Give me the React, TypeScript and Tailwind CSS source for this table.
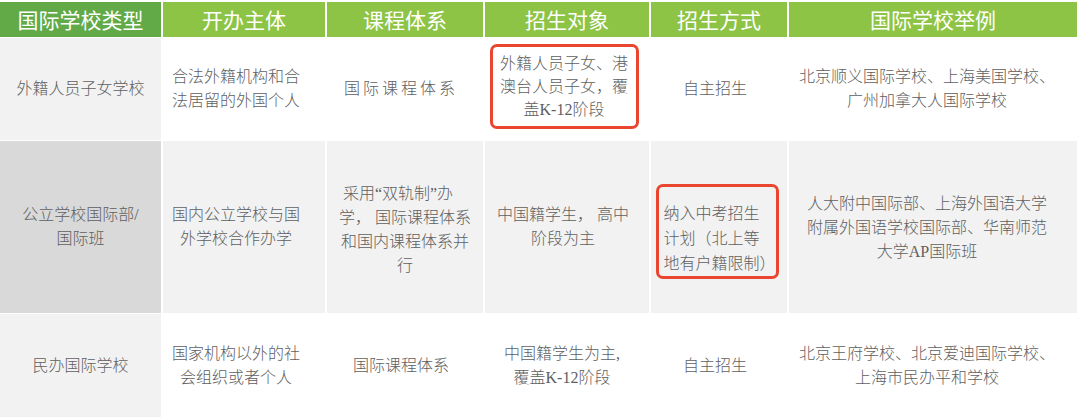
import type { ReactNode } from "react";

const body = "font-['Liberation_Serif','Noto_Sans_CJK_SC',serif] font-light text-[#606060]";

const heads = [
  "国际学校类型",
  "开办主体",
  "课程体系",
  "招生对象",
  "招生方式",
  "国际学校举例",
];

function Cell({ className, children }: { className?: string; children: ReactNode }) {
  return (
    <div className={`flex items-center justify-center text-center text-[16px] leading-[24px] ${body} ${className ?? ""}`}>
      {children}
    </div>
  );
}

function RedBox({ className, children }: { className?: string; children: ReactNode }) {
  return (
    <div className={`rounded-[7px] border-[3px] border-[#e9452f] ${className ?? ""}`}>{children}</div>
  );
}

export default function App() {
  return (
    <div className="h-[417px] w-[1080px] overflow-hidden bg-white pt-[2px]">
      <div className="grid w-[1077px] grid-cols-[161px_162px_156px_164px_136px_288px] grid-rows-[35px_102px_172px_104px] gap-x-[2px] gap-y-[1px]">
        {heads.map((h, i) => (
          <div
            key={h}
            className={`flex items-center justify-center font-['Noto_Sans_CJK_SC',sans-serif] text-[21px] text-white ${
              i === 0 ? "bg-[#62aa47]" : "bg-[#8dc445]"
            }`}
          >
            {h}
          </div>
        ))}

        {/* row 1 */}
        <Cell className="bg-[#f2f2f2] text-[15px]">外籍人员子女学校</Cell>
        <Cell className="bg-white pr-4">
          合法外籍机构和合
          <br />
          法居留的外国个人
        </Cell>
        <Cell className="bg-white pr-2 tracking-[3px]">国际课程体系</Cell>
        <Cell className="bg-white pb-[6px] pr-[6px]">
          <RedBox className="w-[149px] py-[5px] leading-[23px]">
            外籍人员子女、港
            <br />
            澳台人员子女，覆
            <br />
            盖K-12阶段
          </RedBox>
        </Cell>
        <Cell className="bg-white pr-2">自主招生</Cell>
        <Cell className="bg-white pr-3">
          北京顺义国际学校、上海美国学校、
          <br />
          广州加拿大人国际学校
        </Cell>

        {/* row 2 */}
        <Cell className="bg-[#d9d9d9] text-[15px]">
          公立学校国际部/
          <br />
          国际班
        </Cell>
        <Cell className="bg-[#f2f2f2] pr-4">
          国内公立学校与国
          <br />
          外学校合作办学
        </Cell>
        <Cell className="bg-[#f2f2f2] pt-[6px] leading-[23px]">
          <div>
            <div className="pr-[14px]">采用“双轨制”办</div>
            <div>学， 国际课程体系</div>
            <div>和国内课程体系并</div>
            <div>行</div>
          </div>
        </Cell>
        <Cell className="bg-[#f2f2f2] pr-[8px] leading-[23px]">
          中国籍学生， 高中
          <br />
          阶段为主
        </Cell>
        <Cell className="bg-[#f2f2f2] pt-[9px] pr-[4px]">
          <RedBox className="w-[123px] px-[5px] pt-[14px] text-left leading-[25px]">
            纳入中考招生
            <br />
            计划（北上等
            <br />
            地有户籍限制）
          </RedBox>
        </Cell>
        <Cell className="bg-[#f2f2f2] pt-[2px] pr-3 leading-[23px]">
          人大附中国际部、上海外国语大学
          <br />
          附属外国语学校国际部、华南师范
          <br />
          大学AP国际班
        </Cell>

        {/* row 3 */}
        <Cell className="bg-[#f2f2f2] text-[15px]">民办国际学校</Cell>
        <Cell className="bg-white pr-4">
          国家机构以外的社
          <br />
          会组织或者个人
        </Cell>
        <Cell className="bg-white pr-2">国际课程体系</Cell>
        <Cell className="bg-white pr-[10px]">
          中国籍学生为主,
          <br />
          覆盖K-12阶段
        </Cell>
        <Cell className="bg-white pr-2">自主招生</Cell>
        <Cell className="bg-white pr-3">
          北京王府学校、北京爱迪国际学校、
          <br />
          上海市民办平和学校
        </Cell>
      </div>
    </div>
  );
}
